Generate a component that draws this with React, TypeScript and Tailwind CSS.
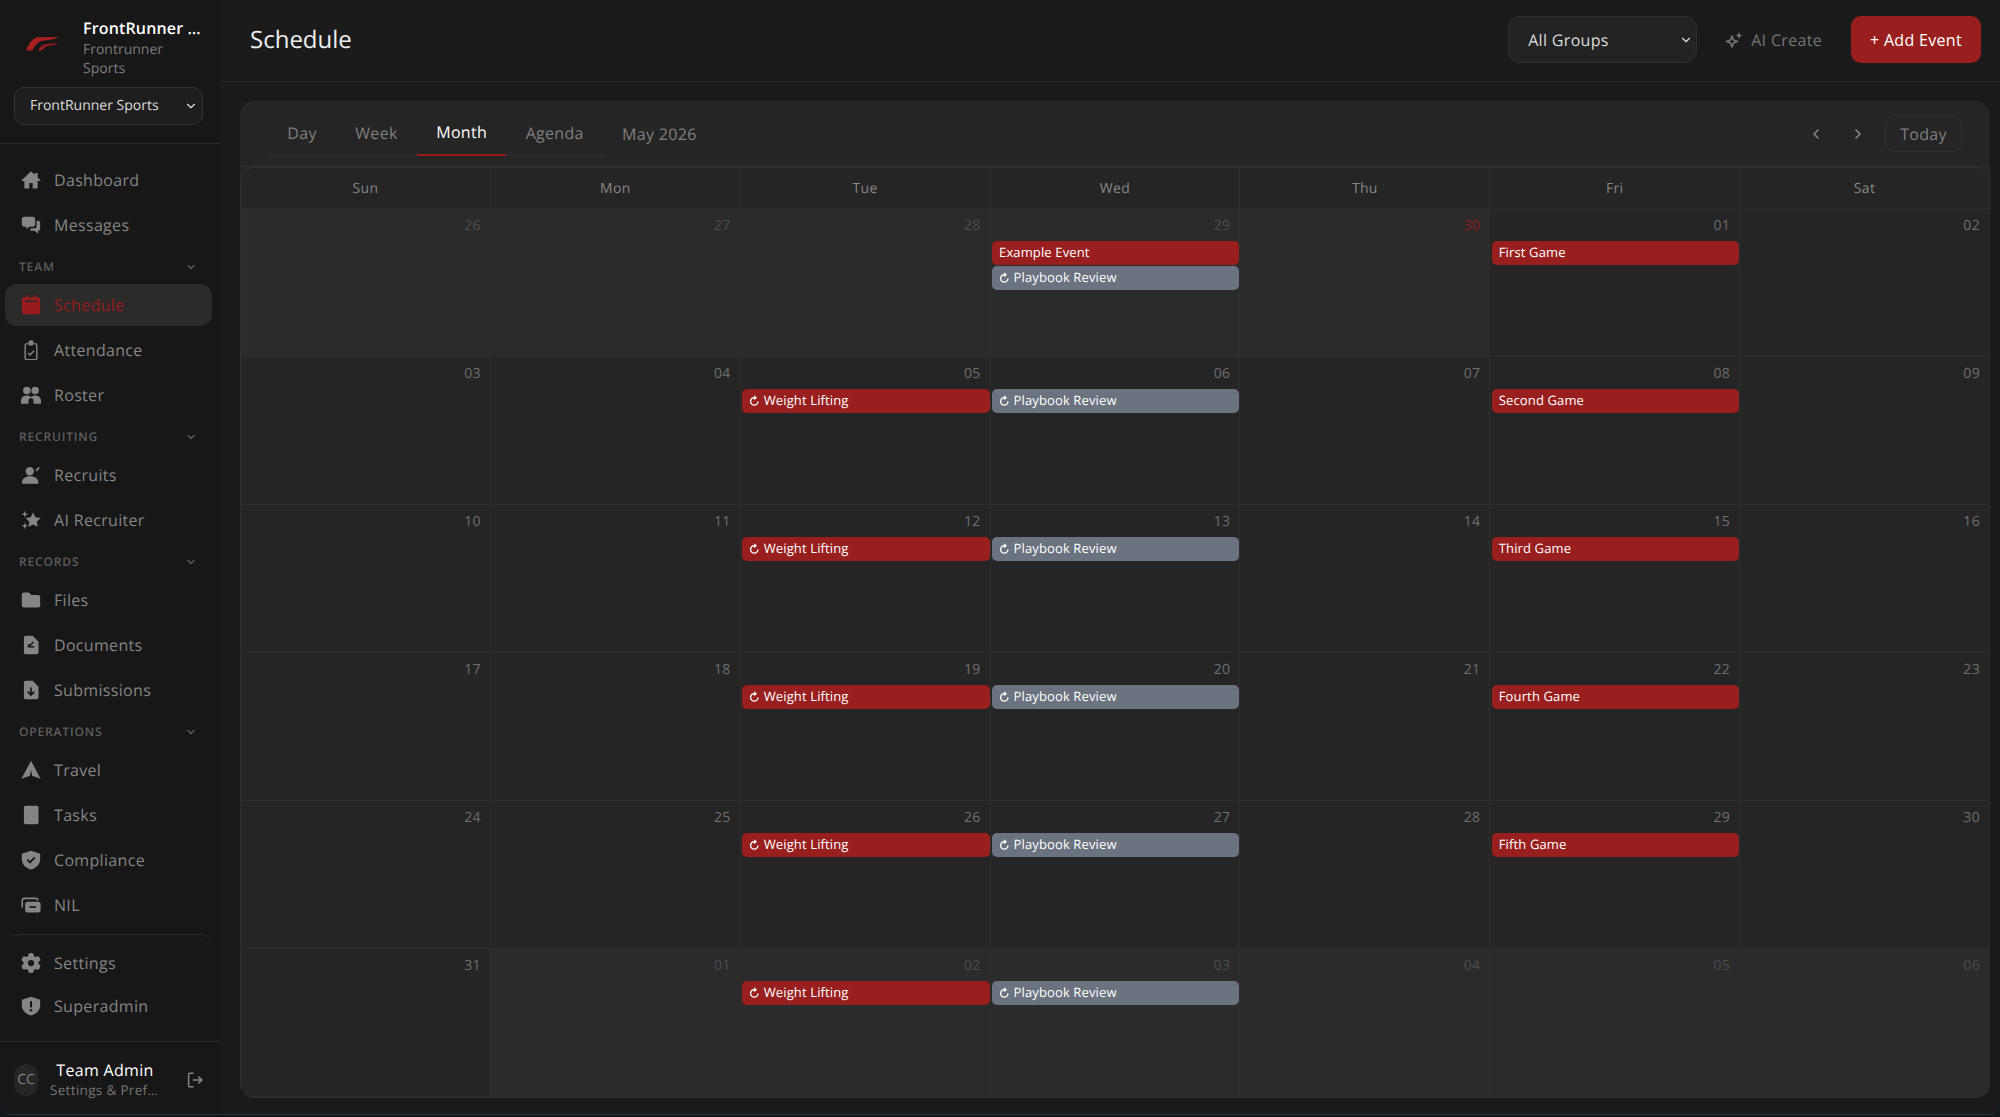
import { ChevronDown, ChevronLeft, ChevronRight } from "lucide-react";
import { FaGear } from "react-icons/fa6";
import type { ReactNode } from "react";

const font = { fontFamily: '"Open Sans", sans-serif', textRendering: "geometricPrecision" as const };

function Ico({ children }: { children: ReactNode }) {
  return (
    <svg viewBox="0 0 24 24" fill="currentColor" className="w-5 h-5 shrink-0">
      {children}
    </svg>
  );
}

const HomeIcon = () => (
  <Ico>
    <path d="M12 1.500 .8 12.200c-.4.4-.1 1 .4 1H4v8c0 .6.4 1 1 1h5v-6.500h4v6.500h5c.6 0 1-.4 1-1v-8h2.800c.5 0 .8-.6.4-1L20 9V3.500h-3.500v2.200z" />
  </Ico>
);
const MessagesIcon = () => (
  <Ico>
    <path d="M3.500 2h11A2.500 2.500 0 0 1 17 4.500v7a2.500 2.500 0 0 1-2.500 2.500H10l-3.500 3v-3h-3A2.500 2.500 0 0 1 1 11.500v-7A2.500 2.500 0 0 1 3.500 2z" />
    <path d="M18.700 7h1.800A2.500 2.500 0 0 1 23 9.500v7a2.500 2.500 0 0 1-2.500 2.500v3.500L16.300 19h-3.600a2.500 2.500 0 0 1-2-1l1.500-2h4.300a2.500 2.500 0 0 0 2.200-2.500z" />
  </Ico>
);
const CalendarIcon = () => (
  <Ico>
    <path d="M6 0h2.500v3h7V0H18v3h2.500A2.500 2.500 0 0 1 23 5.500v15a2.500 2.500 0 0 1-2.500 2.500h-17A2.500 2.500 0 0 1 1 20.500v-15A2.500 2.500 0 0 1 3.500 3H6z" />
    <rect x="5" y="6.500" width="14" height="2" fill="#2b2b2b" />
  </Ico>
);
const ClipboardIcon = () => (
  <svg viewBox="0 0 24 24" fill="none" stroke="currentColor" strokeWidth="1.700" className="w-5 h-5 shrink-0">
    <path d="M8 4.500H7a2 2 0 0 0-2 2v15a2 2 0 0 0 2 2h10a2 2 0 0 0 2-2v-15a2 2 0 0 0-2-2h-1" />
    <circle cx="12" cy="3.500" r="2.500" fill="currentColor" />
    <path d="m8.500 15.500 2.500 2.500 4.500-5" />
  </svg>
);
const RosterIcon = () => (
  <Ico>
    <circle cx="7" cy="6.500" r="4.500" />
    <circle cx="17" cy="6.500" r="4.500" />
    <path d="M0 22.500v-3.500C0 15 3 12.500 7 12.500c2 0 3.800.7 5 1.800 1.200-1.100 3-1.800 5-1.800 4 0 7 2.500 7 6.500v3.500h-9V20c0-1.800-.3-2.900-1.500-4h-3C9.300 17.100 9 18.200 9 20v2.500z" />
  </Ico>
);
const RecruitsIcon = () => (
  <Ico>
    <circle cx="10.500" cy="7.500" r="5" />
    <path d="M1 21.500c0-5 4-8 10-8s10 3 10 8c0 .5-.4 1-1 1H2c-.6 0-1-.5-1-1z" />
    <path d="m18.500 6.500 3-3" stroke="currentColor" strokeWidth="2" strokeLinecap="round" />
  </Ico>
);
const StarIcon = () => (
  <Ico>
    <path d="m14.500 3 2.800 5.700 6.200.9-4.500 4.400 1 6.200-5.500-2.900L9 20.200l1-6.200-4.500-4.400 6.200-.9z" />
    <path d="M4.500 1 5.500 4 8.500 5 5.500 6 4.500 9 3.500 6 .5 5 3.500 4zM4.500 15l1 3 3 1-3 1-1 3-1-3-3-1 3-1z" />
  </Ico>
);
const FolderIcon = () => (
  <Ico>
    <path d="M1 5.500A2.500 2.500 0 0 1 3.500 3h5.300a2 2 0 0 1 1.500.7L12.500 6h8A2.500 2.500 0 0 1 23 8.500v10a2.500 2.500 0 0 1-2.500 2.500h-17A2.500 2.500 0 0 1 1 18.500z" />
  </Ico>
);
const DocChartIcon = () => (
  <Ico>
    <path d="M5.500 1H14l7 7v13a2 2 0 0 1-2 2H5.500a2 2 0 0 1-2-2V3a2 2 0 0 1 2-2z" />
    <path d="M8 14h8M8 11.500l2.500 1L15 8.500" fill="none" stroke="#171717" strokeWidth="1.800" />
  </Ico>
);
const DocDownIcon = () => (
  <Ico>
    <path d="M5.500 1H14l7 7v13a2 2 0 0 1-2 2H5.500a2 2 0 0 1-2-2V3a2 2 0 0 1 2-2z" />
    <path d="M12 9v9M8 14l4 4 4-4" fill="none" stroke="#171717" strokeWidth="2" />
  </Ico>
);
const TravelIcon = () => (
  <Ico>
    <path d="M12 1 23.500 22.500 13.300 19 12 11.500 10.700 19 .5 22.500z" />
  </Ico>
);
const TasksIcon = () => (
  <Ico>
    <rect x="3.500" y="1" width="17.500" height="22" rx="2" />
  </Ico>
);
const ShieldCheckIcon = () => (
  <Ico>
    <path d="M12 1 23 4.500V11c0 6-4.500 10.500-11 12.500C5.500 21.500 1 17 1 11V4.500z" />
    <path d="m7.500 11.500 3.300 3.300 5.700-6" fill="none" stroke="#171717" strokeWidth="2.200" />
  </Ico>
);
const NilIcon = () => (
  <Ico>
    <path d="M20 6.500V6a2 2 0 0 0-2-2H4a2.500 2.500 0 0 0-2.500 2.500V15" fill="none" stroke="currentColor" strokeWidth="2" />
    <rect x="5" y="8" width="18.500" height="13" rx="3" />
    <rect x="10" y="13.500" width="8" height="2" fill="#171717" />
  </Ico>
);
const ShieldAlertIcon = () => (
  <Ico>
    <path d="M12 1 23 4.500V11c0 6-4.500 10.500-11 12.500C5.500 21.500 1 17 1 11V4.500z" />
    <rect x="10.800" y="6" width="2.400" height="8" rx="1" fill="#171717" />
    <circle cx="12" cy="17" r="1.500" fill="#171717" />
  </Ico>
);
const GearIcon = () => <FaGear className="w-5 h-5 shrink-0" />;

const SparkleIcon = () => (
  <svg viewBox="0 0 18 18" fill="none" stroke="currentColor" strokeWidth="1.600" strokeLinejoin="round" className="w-[18px] h-[18px]">
    <path d="M7 5 8.500 9 12.500 10.500 8.500 12 7 16 5.500 12 1.500 10.500 5.500 9z" />
    <path d="M14 1 15 3.500 17.500 4.500 15 5.500 14 8 13 5.500 10.500 4.500 13 3.500z" fill="currentColor" stroke="none" />
  </svg>
);

const LogoutIcon = () => (
  <svg viewBox="0 0 24 24" fill="none" stroke="currentColor" strokeWidth="2" className="w-[18px] h-[18px]">
    <path d="M10 3H5a1.500 1.500 0 0 0-1.500 1.500v15A1.500 1.500 0 0 0 5 21h5" />
    <path d="M9 12h12M16.500 7.500 21 12l-4.500 4.500" />
  </svg>
);

const RepeatIcon = () => (
  <svg viewBox="0 0 24 24" className="w-[11px] h-[11px] mr-[4px] -ml-[0.500px] shrink-0">
    <path d="M19.500 14a8 8 0 1 1-8-8" fill="none" stroke="currentColor" strokeWidth="3" />
    <path d="M11 0.500 17.500 6 11 11.500z" fill="currentColor" />
  </svg>
);

function NavItem({ icon, label, active, tight }: { icon: ReactNode; label: string; active?: boolean; tight?: boolean }) {
  return (
    <div className={tight ? "h-[42.500px] flex items-center pl-4" : "h-[44.800px] py-[1.400px]"}>
      <div
        className={`h-[42px] flex items-center w-[207px] rounded-xl ${tight ? "" : "ml-[5px] pl-4"} ${
          active ? "bg-[#2b2b2b] text-[#991b1b]" : "text-[#858585]"
        }`}
      >
        {icon}
        <span className="ml-[13px] text-base">{label}</span>
      </div>
    </div>
  );
}

function SectionLabel({ label }: { label: string }) {
  return (
    <div className="h-[35.500px] flex items-center justify-between pl-[19px] pr-[24px] pt-[3px] text-[#5e5e5e]">
      <span className="text-xs font-semibold tracking-[0.07em] uppercase">{label}</span>
      <ChevronDown className="w-3 h-3" strokeWidth={2.500} />
    </div>
  );
}

function Sidebar() {
  return (
    <aside className="w-[221px] shrink-0 h-full bg-[#171717] flex flex-col">
      <div className="h-[144px] shrink-0 border-b border-[#2a2a2a]">
        <div className="flex pl-[23px] pt-4">
          <svg viewBox="0 0 37 16" className="w-[37px] h-4 mt-5 shrink-0">
            <path d="M3 14.500C6 8 9 2 15 1.300L36 1C34 2 32 2.800 30 3.200L19 5C15 5.500 12 9 9.500 14.500Z" fill="#a81f1f" />
            <path d="M15 14.500C17 11 19 8.500 23 8L35 7C33 8 31 9 29 9.500L25 10C23 10.500 21 12 19 14.500Z" fill="#8f1d1d" />
          </svg>
          <div className="ml-[23px] w-[120px]">
            <div className="text-base font-semibold text-white leading-6 truncate tracking-[0.01em]">FrontRunner Sports</div>
            <div className="text-sm text-[#7c7c7c] leading-[19px] tracking-normal">Frontrunner Sports</div>
          </div>
        </div>
        <div className="mx-[14px] w-[189px] mt-[9px] h-[38px] rounded-[10px] border border-[#333333] bg-[#1e1e1e] flex items-center justify-between pl-[15px] pr-1 text-sm tracking-normal text-[#dddddd]">
          FrontRunner Sports
          <ChevronDown className="w-[14px] h-[14px]" />
        </div>
      </div>

      <nav className="pt-[14px]">
        <NavItem icon={<HomeIcon />} label="Dashboard" />
        <NavItem icon={<MessagesIcon />} label="Messages" />
        <SectionLabel label="Team" />
        <NavItem icon={<CalendarIcon />} label="Schedule" active />
        <NavItem icon={<ClipboardIcon />} label="Attendance" />
        <NavItem icon={<RosterIcon />} label="Roster" />
        <SectionLabel label="Recruiting" />
        <NavItem icon={<RecruitsIcon />} label="Recruits" />
        <NavItem icon={<StarIcon />} label="AI Recruiter" />
        <SectionLabel label="Records" />
        <NavItem icon={<FolderIcon />} label="Files" />
        <NavItem icon={<DocChartIcon />} label="Documents" />
        <NavItem icon={<DocDownIcon />} label="Submissions" />
        <SectionLabel label="Operations" />
        <NavItem icon={<TravelIcon />} label="Travel" />
        <NavItem icon={<TasksIcon />} label="Tasks" />
        <NavItem icon={<ShieldCheckIcon />} label="Compliance" />
        <NavItem icon={<NilIcon />} label="NIL" />
      </nav>

      <div className="mt-[7px] mx-[5px] rounded-t-2xl border-t border-[#2a2a2a] pt-[7px]">
        <NavItem icon={<GearIcon />} label="Settings" tight />
        <NavItem icon={<ShieldAlertIcon />} label="Superadmin" tight />
      </div>

      <div className="mt-auto h-[73px] pt-[3px] border-t border-[#2a2a2a] flex items-center pl-[14px]">
        <div className="w-6 h-8 rounded-full bg-[#262626] text-[#858585] text-sm tracking-normal flex items-center justify-center shrink-0">
          CC
        </div>
        <div className="w-[120px] ml-[7px] text-center">
          <div className="text-base font-medium text-white leading-5">Team Admin</div>
          <div className="text-[13.500px] text-[#757575] leading-5 truncate px-[5px]">Settings &amp; Preferences</div>
        </div>
        <div className="ml-[21px] text-[#858585]">
          <LogoutIcon />
        </div>
      </div>
    </aside>
  );
}

type Ev = { title: string; tone: "red" | "gray"; repeat?: boolean };
type Day = { n: string; muted?: boolean; today?: boolean; events?: Ev[] };

const lift: Ev = { title: "Weight Lifting", tone: "red", repeat: true };
const review: Ev = { title: "Playbook Review", tone: "gray", repeat: true };
const game = (title: string): Ev => ({ title, tone: "red" });

const weeks: Day[][] = [
  [
    { n: "26", muted: true },
    { n: "27", muted: true },
    { n: "28", muted: true },
    { n: "29", muted: true, events: [game("Example Event"), review] },
    { n: "30", muted: true, today: true },
    { n: "01", events: [game("First Game")] },
    { n: "02" },
  ],
  [
    { n: "03" },
    { n: "04" },
    { n: "05", events: [lift] },
    { n: "06", events: [review] },
    { n: "07" },
    { n: "08", events: [game("Second Game")] },
    { n: "09" },
  ],
  [
    { n: "10" },
    { n: "11" },
    { n: "12", events: [lift] },
    { n: "13", events: [review] },
    { n: "14" },
    { n: "15", events: [game("Third Game")] },
    { n: "16" },
  ],
  [
    { n: "17" },
    { n: "18" },
    { n: "19", events: [lift] },
    { n: "20", events: [review] },
    { n: "21" },
    { n: "22", events: [game("Fourth Game")] },
    { n: "23" },
  ],
  [
    { n: "24" },
    { n: "25" },
    { n: "26", events: [lift] },
    { n: "27", events: [review] },
    { n: "28" },
    { n: "29", events: [game("Fifth Game")] },
    { n: "30" },
  ],
  [
    { n: "31" },
    { n: "01", muted: true },
    { n: "02", muted: true, events: [lift] },
    { n: "03", muted: true, events: [review] },
    { n: "04", muted: true },
    { n: "05", muted: true },
    { n: "06", muted: true },
  ],
];

const dayNames = ["Sun", "Mon", "Tue", "Wed", "Thu", "Fri", "Sat"];

function EventBar({ ev }: { ev: Ev }) {
  return (
    <div
      className={`h-6 rounded-[5px] flex items-center pl-[7px] text-[13px] tracking-[0.01em] text-white ${
        ev.tone === "red" ? "bg-[#991f1f]" : "bg-[#6b7280]"
      }`}
    >
      {ev.repeat && <RepeatIcon />}
      <span>{ev.title}</span>
    </div>
  );
}

function Calendar() {
  return (
    <div className="flex-1 flex flex-col rounded-t-[14px] border-t border-l border-[#303030]">
      <div className="grid grid-cols-7 h-[41px] shrink-0 border-b border-[#2c2c2c]">
        {dayNames.map((d) => (
          <div key={d} className="flex items-center justify-center pt-[2px] text-sm text-[#858585] border-r border-[#303030]">
            {d}
          </div>
        ))}
      </div>
      <div className="flex-1 grid grid-cols-7 grid-rows-6">
        {weeks.flat().map((day, i) => (
          <div
            key={i}
            className={`border-r border-b border-[#2e2e2e] pl-[1.500px] ${day.muted ? "bg-[#2b2b2b]" : ""}`}
          >
            <div
              className={`h-[31.500px] pt-[7px] pr-[9px] text-right text-sm leading-5 ${
                day.today ? "text-[#8f1f1f]" : day.muted ? "text-[#4d4d4d]" : "text-[#707070]"
              }`}
            >
              {day.n}
            </div>
            <div className="flex flex-col gap-px">
              {day.events?.map((ev) => (
                <EventBar key={ev.title} ev={ev} />
              ))}
            </div>
          </div>
        ))}
      </div>
    </div>
  );
}

export default function App() {
  return (
    <div style={font} className="w-screen h-screen overflow-hidden bg-[#12171d] tracking-[0.02em]">
      <div className="h-[1115px] flex overflow-hidden bg-[#1a1a1a] rounded-b-xl border-b border-[#2f2f2f]">
        <Sidebar />
        <main className="flex-1 flex flex-col min-w-0">
          <header className="h-[82px] shrink-0 border-b border-[#2a2a2a] bg-[#1b1b1b] flex items-center pl-[29px] pr-[19px]">
            <h1 className="text-2xl font-medium text-[#eeeeee] -mt-[2px] tracking-normal">Schedule</h1>
            <div className="ml-auto -mt-[2px] h-[47px] w-[189px] rounded-xl border border-[#2f2f2f] bg-[#232323] flex items-center justify-between pl-[19px] pr-[3px] text-base text-[#dddddd]">
              All Groups
              <ChevronDown className="w-[14px] h-[14px]" />
            </div>
            <div className="ml-[28px] -mt-[2px] flex items-center gap-2 text-base text-[#757575]">
              <SparkleIcon />
              AI Create
            </div>
            <button className="ml-[29px] -mt-[2px] h-[47px] w-[130px] rounded-[10px] bg-[#991f1f] text-white text-base font-medium">
              + Add Event
            </button>
          </header>

          <div className="flex-1 min-h-0 pt-[19px] pl-[19px] pr-[10px] pb-4">
            <section className="h-full rounded-[14px] bg-[#252525] border-b border-[#2e2e2e] flex flex-col overflow-hidden">
              <div className="h-[66px] shrink-0 flex items-center pl-7 pr-7 border-b border-[#303030]">
                <div className="flex items-center h-[44px] border-b border-[#303030] text-base text-[#7f7f7f]">
                  <span className="px-[19.250px]">Day</span>
                  <span className="px-[19.250px]">Week</span>
                  <span className="px-[19.250px] h-[44px] flex items-center pb-[2px] font-medium text-white border-b-2 border-[#991b1b] -mb-px">
                    Month
                  </span>
                  <span className="px-[19.250px]">Agenda</span>
                </div>
                <span className="ml-[19px] text-base text-[#7f7f7f]">May 2026</span>
                <ChevronLeft className="ml-auto w-4 h-4 text-[#858585]" strokeWidth={2.500} />
                <ChevronRight className="ml-[26px] w-4 h-4 text-[#858585]" strokeWidth={2.500} />
                <div className="ml-[19px] h-[37px] w-[77px] rounded-[10px] border border-[#313131] flex items-center justify-center text-base text-[#7f7f7f]">
                  Today
                </div>
              </div>
              <Calendar />
            </section>
          </div>
        </main>
      </div>
    </div>
  );
}
